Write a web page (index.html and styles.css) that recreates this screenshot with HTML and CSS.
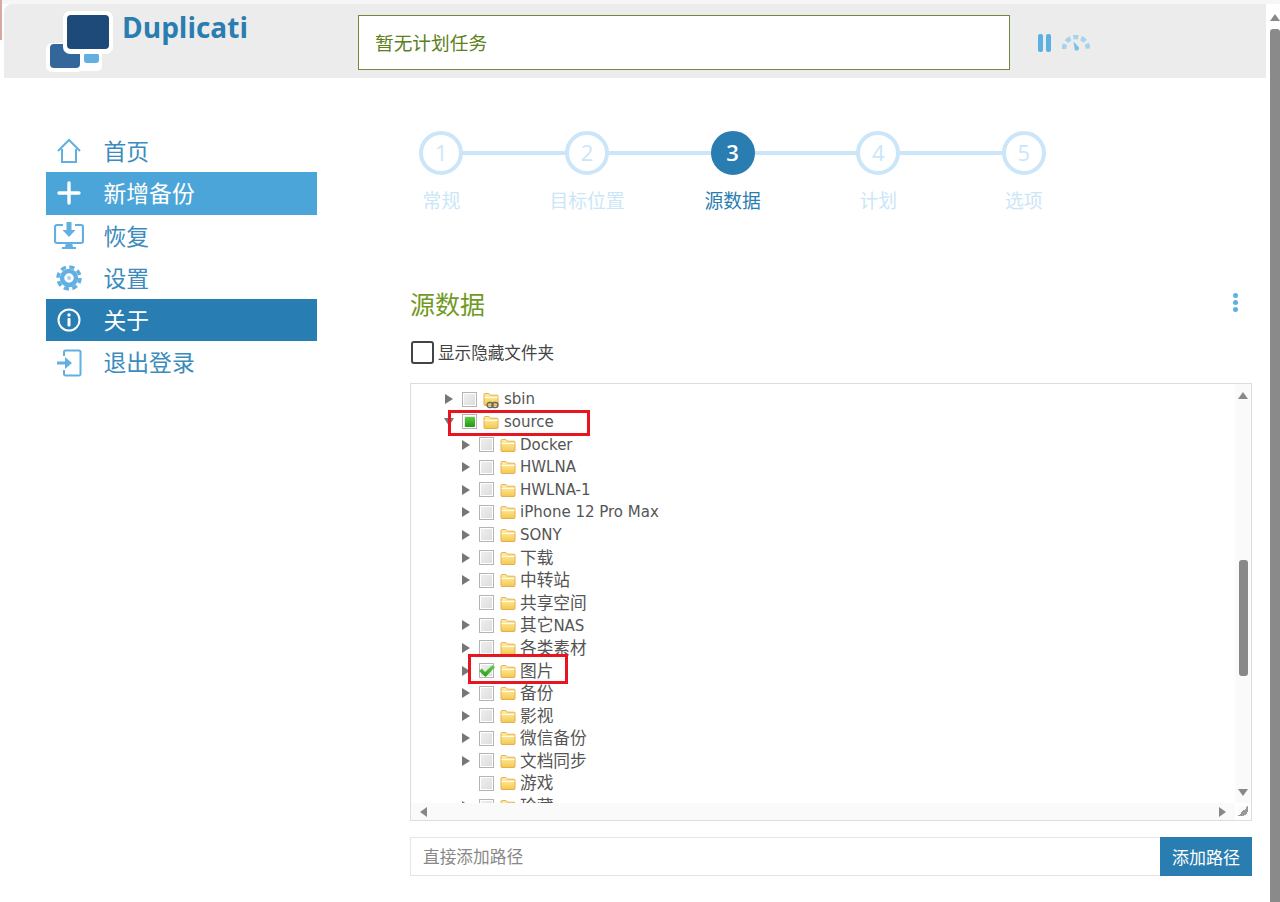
FILE: index.html
```html
<!DOCTYPE html>
<html lang="zh-CN">
<head>
<meta charset="utf-8">
<title>Duplicati</title>
<link rel="stylesheet" href="styles.css">
</head>
<body>
<svg class="defs" width="0" height="0" aria-hidden="true">
  <defs>
    <linearGradient id="fg" x1="0" y1="0" x2="0" y2="1">
      <stop offset="0" stop-color="#fff1b0"/>
      <stop offset="1" stop-color="#f4c84f"/>
    </linearGradient>
    <linearGradient id="gg" x1="0" y1="0" x2="0" y2="1">
      <stop offset="0" stop-color="#6fd04a"/>
      <stop offset="1" stop-color="#1f9a16"/>
    </linearGradient>
    <symbol id="folder" viewBox="0 0 16 14">
      <path d="M1 12.500V2.600c0-.6.4-1 1-1h4l1.300 1.600H14c.6 0 1 .4 1 1v8.300c0 .6-.4 1-1 1H2c-.6 0-1-.4-1-1z" fill="url(#fg)" stroke="#e5ae4f"/>
      <path d="M1.500 5.500h13" stroke="#fffbe6" fill="none"/>
    </symbol>
  </defs>
</svg>
<div class="strip"></div>
<div class="window">
  <div class="page">
    <header class="header">
      <svg class="logo" width="68" height="62" viewBox="0 0 68 62">
        <rect x="0" y="33" width="37" height="29" rx="6" fill="#fff"/>
        <rect x="30" y="40" width="26" height="21" rx="5" fill="#fff"/>
        <rect x="38" y="43" width="15" height="10" rx="3" fill="#62b0e2"/>
        <rect x="4" y="34" width="30" height="24" rx="4" fill="#33669b"/>
        <rect x="17" y="1" width="50" height="43" rx="7" fill="#fff"/>
        <rect x="21" y="5" width="42" height="34" rx="4" fill="#1d4a78"/>
      </svg>
      <div class="brand">Duplicati</div>
      <div class="status">暂无计划任务</div>
      <svg class="pause" width="14" height="18" viewBox="0 0 14 18">
        <rect x="0" y="0" width="5" height="18" rx="2" fill="#5cb0e2"/>
        <rect x="8" y="0" width="5" height="18" rx="2" fill="#5cb0e2"/>
      </svg>
      <svg class="gauge" width="28" height="16" viewBox="0 0 28 16">
        <path d="M2 14A12 12 0 0 1 26 14" fill="none" stroke="#a6d2ec" stroke-width="4.500" stroke-dasharray="5 3"/>
        <path d="M11.500 6.500l5.500 6a2.600 2.600 0 0 1-4.200 2.600z" fill="#7fbfe6"/>
      </svg>
    </header>
    <div class="body">
      <nav class="sidebar">
        <a class="nav-item">
          <svg class="nav-icon" width="26" height="26" viewBox="0 0 26 26"><path d="M2 13L13 2l11 11M6 11v13h14V11" fill="none" stroke="#62b0e2" stroke-width="2"/></svg>
          <span>首页</span>
        </a>
        <a class="nav-item add">
          <svg class="nav-icon" width="26" height="26" viewBox="0 0 26 26"><path d="M13 3v20M3 13h20" fill="none" stroke="#fff" stroke-width="3.400" stroke-linecap="round"/></svg>
          <span>新增备份</span>
        </a>
        <a class="nav-item">
          <svg class="nav-icon wide" width="30" height="28" viewBox="0 0 30 28"><path d="M9 3H3a2 2 0 0 0-2 2v14a2 2 0 0 0 2 2h24a2 2 0 0 0 2-2V5a2 2 0 0 0-2-2h-6" fill="none" stroke="#62b0e2" stroke-width="2.200"/><path d="M12.500 0h5v8h4L15 15 8.500 8h4zM12 21h6l1 4h3v2H8v-2h3z" fill="#62b0e2"/></svg>
          <span>恢复</span>
        </a>
        <a class="nav-item">
          <svg class="nav-icon" width="26" height="26" viewBox="0 0 26 26"><circle cx="13" cy="13" r="11" fill="none" stroke="#62b0e2" stroke-width="3.500" stroke-dasharray="5.140 3.500"/><circle cx="13" cy="13" r="7" fill="none" stroke="#62b0e2" stroke-width="4.500"/><circle cx="13" cy="13" r="2" fill="#a6d2ec"/></svg>
          <span>设置</span>
        </a>
        <a class="nav-item about">
          <svg class="nav-icon" width="26" height="26" viewBox="0 0 26 26"><circle cx="13" cy="13" r="10.500" fill="none" stroke="#fff" stroke-width="2"/><circle cx="13" cy="8" r="1.700" fill="#fff"/><rect x="11.500" y="11" width="3" height="8.500" rx="1" fill="#fff"/></svg>
          <span>关于</span>
        </a>
        <a class="nav-item">
          <svg class="nav-icon" width="26" height="28" viewBox="0 0 26 28"><path d="M8 7V3a1.500 1.500 0 0 1 1.500-1.500H23A1.500 1.500 0 0 1 24.500 3v22a1.500 1.500 0 0 1-1.500 1.500H9.500A1.500 1.500 0 0 1 8 25v-4" fill="none" stroke="#62b0e2" stroke-width="2"/><path d="M1 12.500h8V8l7 6-7 6v-4.500H1z" fill="#62b0e2"/></svg>
          <span>退出登录</span>
        </a>
      </nav>
      <main class="main">
        <ol class="steps">
          <li class="step"><span class="dot">1</span><span class="step-name">常规</span></li>
          <li class="step"><span class="dot">2</span><span class="step-name">目标位置</span></li>
          <li class="step current"><span class="dot">3</span><span class="step-name">源数据</span></li>
          <li class="step"><span class="dot">4</span><span class="step-name">计划</span></li>
          <li class="step"><span class="dot">5</span><span class="step-name">选项</span></li>
        </ol>
        <section class="source">
          <div class="title-row">
            <h1>源数据</h1>
            <div class="kebab"><i></i><i></i><i></i></div>
          </div>
          <label class="hidden-toggle"><span class="big-box"></span>显示隐藏文件夹</label>
          <div class="tree">
            <div class="tree-view">
              <div class="rows">
                <div class="row l1"><i class="arrow none"></i><i class="cb"></i></div>
                <div class="row l1"><i class="arrow"></i><i class="cb"></i><span class="fold"><svg width="16" height="14"><use href="#folder"/></svg><svg class="chain" width="13" height="8" viewBox="0 0 13 8"><rect x="1" y="1.500" width="6" height="5" rx="2.500" fill="none" stroke="#666" stroke-width="1.400"/><rect x="6" y="1.500" width="6" height="5" rx="2.500" fill="none" stroke="#666" stroke-width="1.400"/></svg></span><span class="name">sbin</span></div>
                <div class="row l1"><i class="arrow open"></i><i class="cb part"></i><span class="fold"><svg width="16" height="14"><use href="#folder"/></svg></span><span class="name">source</span></div>
                <div class="row l2"><i class="arrow"></i><i class="cb"></i><span class="fold"><svg width="16" height="14"><use href="#folder"/></svg></span><span class="name">Docker</span></div>
                <div class="row l2"><i class="arrow"></i><i class="cb"></i><span class="fold"><svg width="16" height="14"><use href="#folder"/></svg></span><span class="name">HWLNA</span></div>
                <div class="row l2"><i class="arrow"></i><i class="cb"></i><span class="fold"><svg width="16" height="14"><use href="#folder"/></svg></span><span class="name">HWLNA-1</span></div>
                <div class="row l2"><i class="arrow"></i><i class="cb"></i><span class="fold"><svg width="16" height="14"><use href="#folder"/></svg></span><span class="name">iPhone 12 Pro Max</span></div>
                <div class="row l2"><i class="arrow"></i><i class="cb"></i><span class="fold"><svg width="16" height="14"><use href="#folder"/></svg></span><span class="name">SONY</span></div>
                <div class="row l2"><i class="arrow"></i><i class="cb"></i><span class="fold"><svg width="16" height="14"><use href="#folder"/></svg></span><span class="name cjk">下载</span></div>
                <div class="row l2"><i class="arrow"></i><i class="cb"></i><span class="fold"><svg width="16" height="14"><use href="#folder"/></svg></span><span class="name cjk">中转站</span></div>
                <div class="row l2"><i class="arrow none"></i><i class="cb"></i><span class="fold"><svg width="16" height="14"><use href="#folder"/></svg></span><span class="name cjk">共享空间</span></div>
                <div class="row l2"><i class="arrow"></i><i class="cb"></i><span class="fold"><svg width="16" height="14"><use href="#folder"/></svg></span><span class="name"><span class="cjk">其它</span>NAS</span></div>
                <div class="row l2"><i class="arrow"></i><i class="cb"></i><span class="fold"><svg width="16" height="14"><use href="#folder"/></svg></span><span class="name cjk">各类素材</span></div>
                <div class="row l2"><i class="arrow"></i><i class="cb on"><svg width="18" height="14" viewBox="0 0 18 14"><path d="M1 7l3-2.500 3 3.500L14.500 1 17 3 7.500 13z" fill="url(#gg)"/></svg></i><span class="fold"><svg width="16" height="14"><use href="#folder"/></svg></span><span class="name cjk">图片</span></div>
                <div class="row l2"><i class="arrow"></i><i class="cb"></i><span class="fold"><svg width="16" height="14"><use href="#folder"/></svg></span><span class="name cjk">备份</span></div>
                <div class="row l2"><i class="arrow"></i><i class="cb"></i><span class="fold"><svg width="16" height="14"><use href="#folder"/></svg></span><span class="name cjk">影视</span></div>
                <div class="row l2"><i class="arrow"></i><i class="cb"></i><span class="fold"><svg width="16" height="14"><use href="#folder"/></svg></span><span class="name cjk">微信备份</span></div>
                <div class="row l2"><i class="arrow"></i><i class="cb"></i><span class="fold"><svg width="16" height="14"><use href="#folder"/></svg></span><span class="name cjk">文档同步</span></div>
                <div class="row l2"><i class="arrow none"></i><i class="cb"></i><span class="fold"><svg width="16" height="14"><use href="#folder"/></svg></span><span class="name cjk">游戏</span></div>
                <div class="row l2"><i class="arrow"></i><i class="cb"></i><span class="fold"><svg width="16" height="14"><use href="#folder"/></svg></span><span class="name cjk">珍藏</span></div>
              </div>
            </div>
            <div class="vbar">
              <i class="tri up"></i>
              <i class="vthumb"></i>
              <i class="tri down"></i>
            </div>
            <div class="hbar">
              <i class="tri left"></i>
              <i class="tri right"></i>
            </div>
            <div class="corner"></div>
            <div class="mark mark-source"></div>
            <div class="mark mark-pics"></div>
          </div>
          <div class="path-row">
            <div class="path-input">直接添加路径</div>
            <button class="path-btn">添加路径</button>
          </div>
        </section>
      </main>
    </div>
  </div>
  <div class="page-bar">
    <i class="tri up"></i>
    <i class="page-thumb"></i>
  </div>
</div>
</body>
</html>
```

FILE: styles.css
```css
* { box-sizing: border-box; }
html, body { margin: 0; height: 902px; overflow: hidden; background: #fff; }
body {
  font-family: "Noto Sans CJK SC", "Open Sans", sans-serif;
  color: #2a7db1;
  display: flex;
  flex-direction: column;
  position: relative;
}
.defs { position: absolute; }
.strip {
  position: absolute;
  left: 0; top: 0;
  width: 2px; height: 40px;
  background: #d9a8a4;
}
.window {
  display: flex;
  height: 902px;
  padding: 4px 0 0 4px;
  background: linear-gradient(#f6f6f6 4px, #fff 4px);
}
.page { width: 1262px; flex: none; display: flex; flex-direction: column; }
.header {
  height: 74px;
  background: #ececec;
  border-top-left-radius: 8px;
  display: flex;
  align-items: flex-start;
  flex: none;
}
.logo { margin: 6px 0 0 42px; flex: none; }
.brand {
  width: 236px;
  margin: 4px 0 0 8px;
  font: 700 28px/38px "Open Sans", sans-serif;
  color: #2a7db1;
}
.status {
  width: 652px;
  height: 55px;
  margin-top: 11px;
  padding-left: 16px;
  background: #fff;
  border: 1px solid #6f8a3a;
  color: #5d7f1c;
  font-size: 18.700px;
  line-height: 51px;
}
.pause { margin: 30px 0 0 28px; flex: none; }
.gauge { margin: 31px 0 0 10px; flex: none; }

.body { display: flex; flex: 1; padding-top: 52px; background: #fff; }
.sidebar { width: 271px; margin-left: 42px; flex: none; }
.nav-item {
  display: flex;
  align-items: center;
  height: 42.300px;
  font-size: 22.800px;
  line-height: 42px;
  padding-left: 10px;
  color: #3b8bbd;
  position: relative;
}
.nav-item span { position: absolute; left: 57.500px; top: 0; }
.nav-icon { flex: none; }
.add { background: #4ca5d9; color: #fff; }
.about { background: #287db2; color: #fff; }
.nav-icon.wide { margin-left: -2px; }

.main { width: 884px; margin-left: 51px; flex: none; }
.steps {
  list-style: none;
  margin: 0;
  padding: 1px 0 0 0.600px;
  display: flex;
  width: 729px;
}
.step {
  width: 145.600px;
  display: flex;
  flex-direction: column;
  align-items: center;
  position: relative;
  color: #cbe6f8;
}
.step + .step::before {
  content: "";
  position: absolute;
  top: 20px;
  left: -72.800px;
  width: 145.600px;
  height: 4px;
  background: #cbe6f8;
}
.dot {
  position: relative;
  z-index: 1;
  width: 44px;
  height: 44px;
  border: 4.500px solid #cbe6f8;
  border-radius: 50%;
  background: #fff;
  font: 400 22px/35px "Open Sans", sans-serif;
  text-align: center;
}
.step-name { margin-top: 11px; margin-bottom: 1px; font-size: 18.800px; line-height: 27px; }
.current { color: #2a7db1; }
.current .dot { background: #2a7db1; border-color: #2a7db1; color: #fff; font-weight: 600; }

.source { padding: 0 0 0 42px; }
.title-row {
  display: flex;
  justify-content: space-between;
  align-items: center;
  margin-top: 72px;
  height: 34px;
}
h1 { margin: 0; font-weight: 400; font-size: 25px; line-height: 34px; color: #6f9a1f; }
.kebab { display: flex; flex-direction: column; gap: 2px; margin: 0 14px 1px 0; }
.kebab i { width: 5px; height: 5px; border-radius: 50%; background: #5cb0e2; }
.hidden-toggle {
  display: flex;
  align-items: center;
  margin-top: 21px;
  height: 22px;
  padding-left: 1px;
  color: #444;
  font-size: 16.600px;
}
.big-box {
  width: 23px;
  height: 23px;
  margin-right: 4px;
  border: 2px solid #444;
  border-radius: 3px;
  background: #fff;
}
.tree {
  position: relative;
  margin-top: 20px;
  height: 438px;
  border: 1px solid #ddd;
  display: grid;
  grid-template-columns: 1fr 16px;
  grid-template-rows: 1fr 17px;
}
.tree-view { overflow: hidden; min-width: 0; min-height: 0; }
.rows { margin-top: -18.500px; }
.row {
  display: flex;
  align-items: center;
  height: 22.600px;
  color: #555;
  white-space: nowrap;
}
.l1 { padding-left: 34px; }
.l2 { padding-left: 51px; }
.arrow {
  width: 0; height: 0;
  margin-right: 9px;
  border-left: 8px solid #777;
  border-top: 5px solid transparent;
  border-bottom: 5px solid transparent;
  flex: none;
}
.arrow.none { border-left-color: transparent; }
.arrow.open {
  border-left: 5px solid transparent;
  border-right: 5px solid transparent;
  border-top: 8px solid #777;
  border-bottom: 0;
  margin-left: -1px;
  margin-right: 8px;
}
.cb {
  position: relative;
  width: 15px;
  height: 15px;
  flex: none;
  border: 1px solid #b4b4b4;
  box-shadow: inset 0 0 0 1px #fff;
  background: linear-gradient(135deg, #f0f0f0, #dcdcdc);
}
.cb.part::after {
  content: "";
  position: absolute;
  inset: 1.500px;
  border-radius: 1px;
  background: linear-gradient(#5fcb3c, #229a14);
}
.cb.on svg { position: absolute; left: -2px; top: 0; }
.fold { position: relative; width: 16px; height: 14px; margin: 0 4px 0 6px; flex: none; display: block; }
.fold svg { display: block; }
.fold .chain { position: absolute; left: 3px; top: 9px; }
.name { font: 15px/22px "DejaVu Sans", sans-serif; }
.l1 .name { margin-left: 1px; }
.cjk { font: 16.700px/22px "Noto Sans CJK SC", sans-serif; padding-bottom: 2px; }
.name .cjk { padding-bottom: 0; }
.vbar {
  background: #fafafa;
  display: flex;
  flex-direction: column;
  align-items: center;
  padding-top: 8px;
  min-height: 0;
}
.tri { width: 0; height: 0; display: block; flex: none; }
.tri.up { border: 5.500px solid transparent; border-top: 0; border-bottom: 7px solid #888; }
.tri.down { border: 5.500px solid transparent; border-bottom: 0; border-top: 7px solid #888; margin-top: 113px; }
.tri.left { border: 5.500px solid transparent; border-left: 0; border-right: 7px solid #888; }
.tri.right { border: 5.500px solid transparent; border-right: 0; border-left: 7px solid #888; }
.vthumb { width: 9px; height: 116px; margin-top: 161px; border-radius: 3px; background: #888; flex: none; }
.hbar {
  background: #fafafa;
  display: flex;
  justify-content: space-between;
  align-items: center;
  padding: 0 9px;
}
.corner {
  background: linear-gradient(135deg, #fafafa 50%, #999 50%, #999 80%, #fafafa 80%);
  background-size: 10px 10px;
  background-repeat: no-repeat;
  background-position: 3px 3px;
}
.mark { position: absolute; border: 3px solid #e8141f; }
.mark-source { left: 37px; top: 26px; width: 142px; height: 26px; }
.mark-pics { left: 57px; top: 270px; width: 100px; height: 30px; }
.path-row { display: flex; margin-top: 16px; height: 39px; }
.path-input {
  flex: 1;
  border: 1px solid #e5e5e5;
  border-right: 0;
  padding-left: 12px;
  color: #888;
  font-size: 16.700px;
  line-height: 37px;
}
.path-btn {
  width: 92px;
  border: 0;
  padding: 0;
  background: #2a7db1;
  color: #fff;
  font: 17px/39px "Noto Sans CJK SC", sans-serif;
}
.page-bar {
  flex: 1;
  display: flex;
  flex-direction: column;
  align-items: flex-end;
  background: #fff;
  border-top-right-radius: 8px;
  padding: 10px 0 0 0;
  min-width: 0;
}
.page-thumb { width: 10px; height: 880px; margin-top: 8px; border-radius: 3px 3px 0 0; background: #8a8a8a; }
```
